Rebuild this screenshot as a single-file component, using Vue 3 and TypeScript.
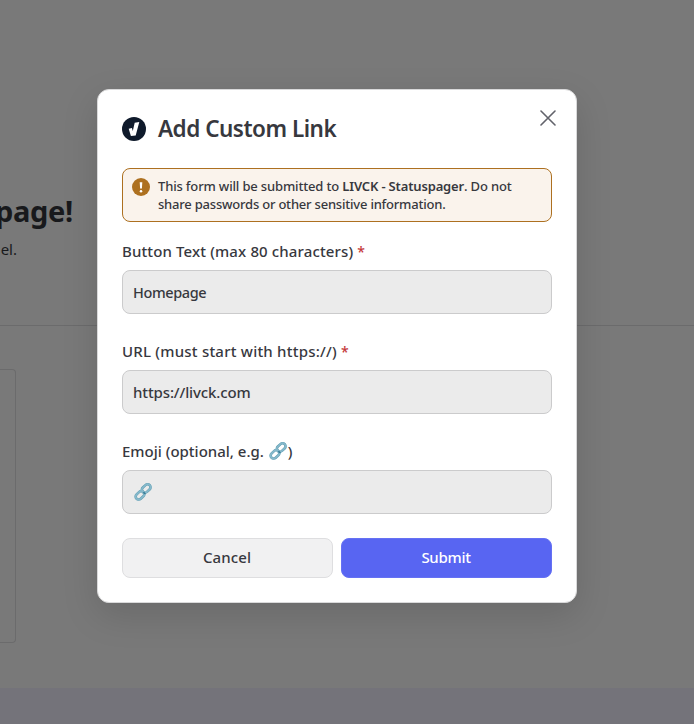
<script setup lang="ts">
import { ref } from 'vue'

interface Field {
  id: string
  label: string
  required: boolean
  link: boolean
}

const fields: Field[] = [
  { id: 'text', label: 'Button Text (max 80 characters)', required: true, link: false },
  { id: 'url', label: 'URL (must start with https://)', required: true, link: false },
  { id: 'emoji', label: 'Emoji (optional, e.g. ', required: false, link: true },
]

const values = ref<Record<string, string>>({
  text: 'Homepage',
  url: 'https://livck.com',
})
</script>

<template>
  <div class="screen">
    <svg class="defs" aria-hidden="true">
      <symbol id="chain" viewBox="0 0 20 20">
        <g fill="none" stroke-linecap="round">
          <g stroke="#5f9db2" stroke-width="2.6">
            <rect x="8.4" y="3.5" width="9.6" height="6" rx="3" transform="rotate(-43 13.2 6.5)" />
            <rect x="2.2" y="10.3" width="9.6" height="6" rx="3" transform="rotate(-43 7 13.3)" />
          </g>
          <g stroke="#86b9cb" stroke-width="1.7">
            <rect x="8.4" y="3.5" width="9.6" height="6" rx="3" transform="rotate(-43 13.2 6.5)" />
            <rect x="2.2" y="10.3" width="9.6" height="6" rx="3" transform="rotate(-43 7 13.3)" />
          </g>
          <path d="M10.8 10.6l1.2 1" stroke="#367c96" stroke-width="1.4" />
        </g>
      </symbol>
    </svg>

    <div class="page">
      <header class="hero">
        <h1>page!</h1>
        <p>el.</p>
      </header>
      <main class="content"><div class="card"></div></main>
      <footer class="foot"></footer>
    </div>

    <div class="overlay">
      <form class="dialog" @submit.prevent>
        <div class="head">
          <svg class="logo" viewBox="0 0 24 24" aria-hidden="true">
            <circle cx="12" cy="12" r="12" fill="#0f1a2b" />
            <path d="M6.7 11.8l3.2-.8.9 3 1.9-8.2 4.6-.8-3.6 13.5-4.8.5z" fill="#fff" />
          </svg>
          <h2>Add Custom Link</h2>
          <button class="close" type="button" aria-label="Close">
            <svg viewBox="0 0 16 16"><path d="M1 1l14 14M15 1L1 15" /></svg>
          </button>
        </div>

        <div class="notice">
          <svg viewBox="0 0 18 18" aria-hidden="true">
            <circle cx="9" cy="9" r="9" fill="#ad7020" />
            <path d="M7.7 4.2h2.6l-.4 6.3H8.1z" fill="#fff" />
            <circle cx="9" cy="13.2" r="1.25" fill="#fff" />
          </svg>
          <p>
            <span>This form will be submitted to <b>LIVCK - Statuspager</b>. Do not</span><br />
            <span class="second">share passwords or other sensitive information.</span>
          </p>
        </div>

        <div v-for="f in fields" :key="f.id" :class="['field', 'field-' + f.id]">
          <label :for="f.id">
            <span>{{ f.label }}</span>
            <template v-if="f.link"><svg class="chain"><use href="#chain" /></svg>)</template>
            <i v-if="f.required">*</i>
          </label>
          <div v-if="f.link" class="box"><svg class="chain"><use href="#chain" /></svg></div>
          <input v-else :id="f.id" v-model="values[f.id]" class="box" type="text" />
        </div>

        <div class="actions">
          <button type="button" class="btn cancel">Cancel</button>
          <button type="submit" class="btn submit">Submit</button>
        </div>
      </form>
    </div>
  </div>
</template>

<style>
body {
  background: #797979;
}
</style>

<style scoped>
* {
  box-sizing: border-box;
}
.screen {
  position: relative;
  width: 694px;
  height: 724px;
  overflow: hidden;
  font-family: 'Noto Sans', sans-serif;
  color: #37383e;
}
.defs {
  position: absolute;
  width: 0;
  height: 0;
}
.page {
  display: flex;
  flex-direction: column;
  height: 100%;
  background: #797979;
  color: #18191c;
}
.hero {
  height: 326px;
  padding-top: 191px;
  border-bottom: 1px solid #6b6b6c;
}
.hero h1 {
  display: flex;
  justify-content: flex-end;
  width: 73px;
  margin: 0;
  font-size: 29px;
  font-weight: 700;
  line-height: 40px;
  letter-spacing: -0.3px;
}
.hero p {
  display: flex;
  justify-content: flex-end;
  width: 17px;
  margin: 7px 0 0;
  font-size: 15px;
  line-height: 22px;
}
.content {
  flex: 1;
  padding-top: 43px;
}
.card {
  width: 16px;
  height: 274px;
  border: 1px solid #6b6b6c;
  border-left: 0;
  border-radius: 0 4px 4px 0;
}
.foot {
  height: 36px;
  background: #74737a;
}
.overlay {
  position: absolute;
  inset: 0;
  padding: 89px 0 0 97px;
}
.dialog {
  width: 480px;
  height: 514px;
  padding: 24px;
  border: 1px solid #d9d9da;
  border-radius: 12px;
  background: #fff;
  box-shadow: 0 12px 36px rgba(0, 0, 0, 0.13);
}
.head {
  display: flex;
  height: 54px;
}
.logo {
  width: 24px;
  height: 24px;
  margin: 3px 12px 0 0;
}
h2 {
  margin: 0;
  font-size: 22.5px;
  line-height: 30px;
  font-weight: 600;
  letter-spacing: -0.5px;
  white-space: nowrap;
}
.close {
  width: 16px;
  height: 16px;
  margin: -4px -4px 0 auto;
  padding: 0;
  border: 0;
  background: none;
}
.close svg {
  display: block;
  width: 16px;
  height: 16px;
  fill: none;
  stroke: #62636b;
  stroke-width: 1.6;
  stroke-linecap: round;
}
.notice {
  display: flex;
  gap: 8px;
  height: 54px;
  margin-bottom: 18px;
  padding: 9px;
  border: 1px solid #ad7020;
  border-radius: 8px;
  background: #faf3ec;
}
.notice svg {
  flex: none;
  width: 18px;
  height: 18px;
}
.notice p {
  margin: -1px 0 0;
  font-size: 13px;
  font-weight: 500;
  line-height: 18px;
  letter-spacing: -0.16px;
  white-space: nowrap;
}
.notice .second {
  letter-spacing: -0.21px;
}
b {
  font-weight: 600;
}
.field {
  height: 100px;
}
label {
  display: flex;
  align-items: center;
  height: 22px;
  margin-bottom: 8px;
  font-size: 15px;
  font-weight: 500;
  white-space: pre;
}
.field-text label {
  letter-spacing: 0.13px;
}
.field-url label {
  letter-spacing: 0.22px;
}
i {
  margin-left: 4px;
  color: #c5393b;
  font-size: 14px;
  font-style: normal;
}
.chain {
  width: 20px;
  height: 20px;
}
.box {
  display: flex;
  align-items: center;
  width: 100%;
  height: 44px;
  padding: 0 10px;
  border: 1px solid #cbcbcc;
  border-radius: 8px;
  background: #ebebeb;
  color: inherit;
  font-family: inherit;
  font-size: 15px;
  font-weight: 500;
  letter-spacing: -0.12px;
  outline: 0;
}
.field-text .box {
  font-size: 14.5px;
  letter-spacing: -0.4px;
}
.actions {
  display: flex;
  gap: 8px;
  margin-top: -2px;
}
.btn {
  flex: 1;
  height: 40px;
  padding: 0 1px 2px 0;
  border: 1px solid #dedee0;
  border-radius: 8px;
  background: #f1f1f2;
  color: #37383e;
  font-family: inherit;
  font-size: 15px;
  font-weight: 500;
  letter-spacing: 0.1px;
}
.btn.submit {
  border-color: #6571f3;
  background: #5865f2;
  color: #fff;
  letter-spacing: -0.3px;
}
</style>
